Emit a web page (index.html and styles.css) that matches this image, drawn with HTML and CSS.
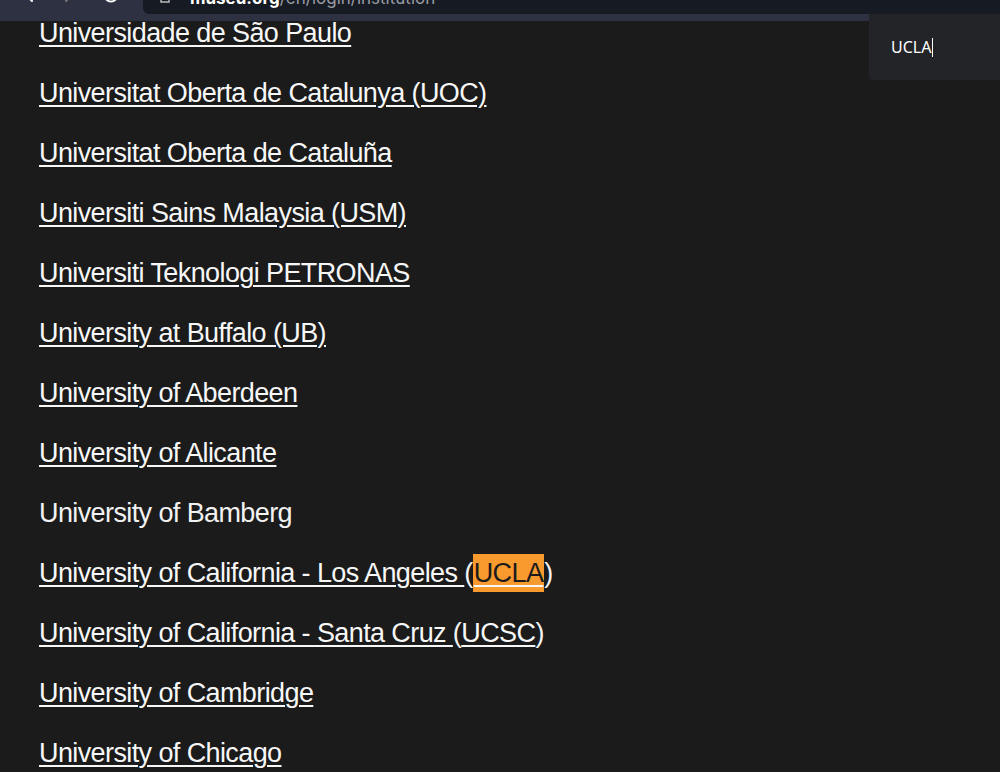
FILE: index.html
```html
<!DOCTYPE html>
<html lang="en">
<head>
  <meta charset="UTF-8">
  <title>Institution login</title>
  <link rel="stylesheet" href="styles.css">
</head>
<body>
  <div class="toolbar">
    <div class="toolbar__nav">
      <svg class="nav-icon nav-icon--back" width="16" height="16" viewBox="0 0 16 16"><path d="M10 2 L4 8 L10 14" fill="none" stroke="#fff" stroke-width="2" stroke-linecap="round"/></svg>
      <svg class="nav-icon nav-icon--fwd" width="16" height="16" viewBox="0 0 16 16"><path d="M6 2 L12 8 L6 14" fill="none" stroke="#777" stroke-width="2" stroke-linecap="round"/></svg>
      <svg class="nav-icon nav-icon--reload" width="18" height="18" viewBox="0 0 18 18"><circle cx="9" cy="9" r="6.5" fill="none" stroke="#fff" stroke-width="2"/></svg>
    </div>
    <div class="urlbar">
      <svg class="urlbar__icon" width="10" height="12" viewBox="0 0 10 12"><rect x="1" y="1" width="8" height="10" fill="none" stroke="#bbb" stroke-width="1.5"/></svg>
      <span class="urlbar__host">museu.org</span><span class="urlbar__path">/en/login/institution</span>
    </div>
  </div>

  <main class="page">
    <ul class="institutions">
      <li><a href="#">Universidade de São Paulo</a></li>
      <li><a href="#">Universitat Oberta de Catalunya (UOC)</a></li>
      <li><a href="#">Universitat Oberta de Cataluña</a></li>
      <li><a href="#">Universiti Sains Malaysia (USM)</a></li>
      <li><a href="#">Universiti Teknologi PETRONAS</a></li>
      <li><a href="#">University at Buffalo (UB)</a></li>
      <li><a href="#">University of Aberdeen</a></li>
      <li><a href="#">University of Alicante</a></li>
      <li><span>University of Bamberg</span></li>
      <li><a href="#">University of California - Los Angeles </a>(<a href="#"><mark class="match">UCLA</mark></a>)</li>
      <li><a href="#">University of California - Santa Cruz </a>(<a href="#">UCSC</a>)</li>
      <li><a href="#">University of Cambridge</a></li>
      <li><a href="#">University of Chicago</a></li>
    </ul>
  </main>

  <div class="findbox">
    <span class="findbox__text">UCLA</span><span class="findbox__caret"></span>
  </div>
</body>
</html>
```

FILE: styles.css
```css
html, body {
  margin: 0;
  height: 100%;
  overflow: hidden;
}

body {
  background: #1b1b1b;
  color: #f2f2f2;
  font-family: "Liberation Sans", Arial, sans-serif;
}

.toolbar {
  display: flex;
  height: 21px;
  background: #2e3142;
  overflow: hidden;
}

.toolbar__nav {
  display: flex;
  width: 143px;
  flex-shrink: 0;
}

.nav-icon {
  margin-top: -13px;
}

.nav-icon--back { margin-left: 22px; }
.nav-icon--fwd { margin-left: 22px; }
.nav-icon--reload { margin-left: 26px; margin-top: -14px; }

.urlbar {
  flex: 1;
  height: 14px;
  background: #161a22;
  border-bottom-left-radius: 6px;
  display: flex;
  align-items: flex-end;
  font-family: Inter, sans-serif;
  font-size: 17px;
  line-height: 16px;
  overflow: hidden;
}

.urlbar__icon {
  margin-left: 17px;
  margin-right: 20px;
  margin-bottom: 11px;
}

.urlbar__host {
  color: #fff;
  font-weight: 700;
  margin-bottom: 8px;
}

.urlbar__path {
  color: #9a9ca4;
  margin-bottom: 8px;
}

.page {
  padding-left: 39px;
}

.institutions {
  list-style: none;
  margin: -18px 0 0;
  padding: 0;
  font-size: 27px;
  line-height: 60px;
  letter-spacing: -0.6px;
}

.institutions a {
  color: #f7f7f7;
  text-decoration: underline;
  text-decoration-thickness: 2px;
  text-underline-offset: 3px;
}

.match {
  background: #f99a2e;
  color: #1b1b1b;
  padding: 4px 1px;
}

.findbox {
  position: absolute;
  top: 14px;
  left: 869px;
  right: 0;
  height: 66px;
  background: #232428;
  border-bottom-left-radius: 4px;
  display: flex;
  align-items: center;
  padding-left: 22px;
  box-sizing: border-box;
  font-family: "Noto Sans", "Liberation Sans", sans-serif;
  font-size: 16px;
  color: #fff;
}

.findbox__caret {
  display: inline-block;
  width: 1px;
  height: 19px;
  background: #fff;
  margin-left: 1px;
}
```
